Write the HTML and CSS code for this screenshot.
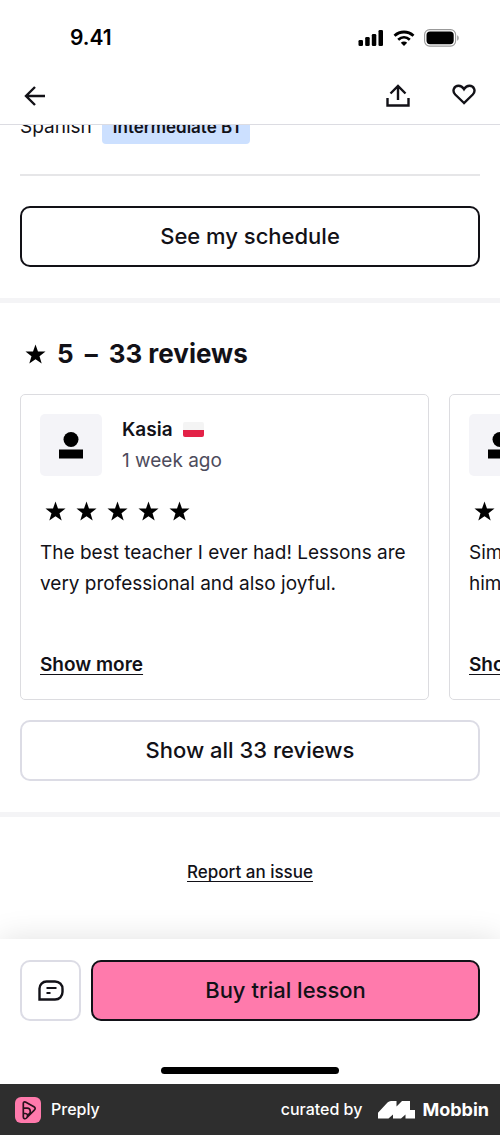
FILE: index.html
```html
<!DOCTYPE html>
<html lang="en">
<head>
  <meta charset="UTF-8" />
  <meta name="viewport" content="width=device-width, initial-scale=1.0" />
  <title>Preply</title>
  <link rel="stylesheet" href="styles.css">
</head>
<body>
  <svg class="sprite" aria-hidden="true">
    <symbol id="star" viewBox="0 0 22 20">
      <path d="M11 0l2.600 7.300 7.900.2-6.300 4.800 2.300 7.700-6.500-4.600L4.500 20l2.300-7.700L.5 7.500l7.900-.2z" />
    </symbol>
    <symbol id="person" viewBox="0 0 24 27">
      <circle cx="12" cy="7.500" r="7.500" />
      <path d="M0 17.500h24v9H0z" />
    </symbol>
  </svg>

  <div class="app">
    <header class="header">
      <div class="status-bar">
        <span class="time">9.41</span>
        <div class="status-icons">
          <svg width="26" height="16" viewBox="0 0 26 16">
            <rect x="0.500" y="10" width="4.500" height="6" rx="1.300" />
            <rect x="7.200" y="7" width="4.500" height="9" rx="1.300" />
            <rect x="13.800" y="4" width="4.500" height="12" rx="1.300" />
            <rect x="20.500" y="0" width="4.500" height="16" rx="1.300" />
          </svg>
          <svg width="22" height="16" viewBox="0 0 22 16">
            <path d="M1.500 5.800C7 .7 15 .7 20.500 5.800M5.200 9.700c3.500-3.100 8.100-3.100 11.600 0" fill="none" stroke="#000" stroke-width="2.800" />
            <path d="M7.800 12.700c1.900-1.600 4.500-1.600 6.400 0L11 16z" />
          </svg>
          <svg width="36" height="18" viewBox="0 0 36 18">
            <rect x="0.600" y="0.600" width="31" height="16.500" rx="5" fill="none" stroke="#999" stroke-width="1.100" />
            <rect x="2.500" y="2.500" width="27.200" height="12.700" rx="3.600" />
            <path d="M33.200 6.200c2 .9 2 4.600 0 5.500z" fill="#999" />
          </svg>
        </div>
      </div>
      <nav class="nav">
        <button class="icon-btn" aria-label="Back">
          <svg width="22" height="20" viewBox="0 0 22 20">
            <path d="M21 10H2M11 1L2 10l9 9" fill="none" stroke="#121117" stroke-width="2.400" />
          </svg>
        </button>
        <div class="nav-actions">
          <button class="icon-btn" aria-label="Share">
            <svg width="24" height="24" viewBox="0 0 24 24">
              <path d="M1.500 14v7.500h21V14M12 16V2M4.500 9.500L12 2l7.500 7.500" fill="none" stroke="#121117" stroke-width="2.400" />
            </svg>
          </button>
          <button class="icon-btn" aria-label="Save">
            <svg width="24" height="24" viewBox="0 0 24 24">
              <path d="M12 19L3.200 10.500C-.3 6.800 2.200 1.800 6.500 1.800c2.300 0 4 1 5.500 3.400 1.500-2.400 3.200-3.400 5.500-3.400 4.300 0 6.800 5 3.300 8.700z" fill="none" stroke="#121117" stroke-width="2.400" />
            </svg>
          </button>
        </div>
      </nav>
    </header>

    <main>
      <section class="about">
        <div class="language">
          <span>Spanish</span>
          <span class="level">Intermediate B1</span>
        </div>
        <hr />
        <button class="btn btn-dark">See my schedule</button>
      </section>

      <section class="reviews">
        <h2><svg class="star"><use href="#star" /></svg><span>5</span><span>–</span><span>33 reviews</span></h2>
        <div class="review-list">
          <article class="card">
            <div class="author">
              <div class="avatar"><svg width="24" height="27"><use href="#person" /></svg></div>
              <div>
                <div class="name">Kasia <span class="flag"></span></div>
                <div class="date">1 week ago</div>
              </div>
            </div>
            <div class="stars">
              <svg class="star"><use href="#star" /></svg>
              <svg class="star"><use href="#star" /></svg>
              <svg class="star"><use href="#star" /></svg>
              <svg class="star"><use href="#star" /></svg>
              <svg class="star"><use href="#star" /></svg>
            </div>
            <p>The best teacher I ever had! Lessons are very professional and also joyful.</p>
            <a href="#">Show more</a>
          </article>
          <article class="card">
            <div class="author">
              <div class="avatar"><svg width="24" height="27"><use href="#person" /></svg></div>
            </div>
            <div class="stars">
              <svg class="star"><use href="#star" /></svg>
            </div>
            <p>Sim<br>him</p>
            <a href="#">Show more</a>
          </article>
        </div>
        <button class="btn">Show all 33 reviews</button>
      </section>

      <section class="report">
        <a href="#">Report an issue</a>
      </section>
    </main>

    <div class="bottom">
      <div class="actions">
        <button class="btn btn-message" aria-label="Message">
          <svg width="26" height="21" viewBox="0 0 26 21">
            <path d="M1.500 19.500V8.500a7 7 0 0 1 7-7h8.500c4.500 0 7.500 3.300 7.500 7.500v3c0 4.200-3 7.500-7.500 7.500z" fill="none" stroke="#121117" stroke-width="2.400" />
            <path d="M8.500 8H18.500M8.500 13H12.500" stroke="#121117" stroke-width="2.200" />
          </svg>
        </button>
        <button class="btn btn-dark btn-pink">Buy trial lesson</button>
      </div>
      <div class="home-bar"></div>
    </div>

    <footer class="credits">
      <svg width="26" height="26" viewBox="0 0 26 26">
        <rect width="26" height="26" rx="6" fill="#ff7aac" />
        <path d="M8.300 20V6.500c0-1.500 1.300-2 2.600-1.300l8.100 4.600c1.500.9 1.500 2.300.3 3.300L11.500 21c-1.500 1.400-3.200.7-3.200-1zM8.500 11.200h3.700c4 0 4 5.800.8 6.500M8.500 16.500h1.700c2.500 0 3 2.200 1.700 3.500" fill="none" stroke="#29121c" stroke-width="1.700" />
      </svg>
      <span>Preply</span>
      <span class="curated">curated by</span>
      <a class="mobbin" href="#">
        <svg width="38" height="18" viewBox="0 0 38 18" fill="#fff">
          <path d="M0 17.500v-5.800L9.500 1.500Q11 0 13 0h5.500v5.500L24 0h8v9h5v8.500h-9.500v-4L23 17.500h-8v-4l-4.500 4z" />
        </svg>
        Mobbin
      </a>
    </footer>
  </div>
</body>
</html>
```

FILE: styles.css
```css
* { box-sizing: border-box; }
body {
  margin: 0;
  font-family: Inter, "Liberation Sans", sans-serif;
  font-size: 19px;
  line-height: 31px;
  color: #121117;
  background: #fff;
}
svg { display: block; flex: none; }
a { color: inherit; text-underline-offset: 3px; }
button {
  font: inherit;
  color: inherit;
  cursor: pointer;
}
.sprite { position: absolute; width: 0; height: 0; }
.app {
  display: flex;
  flex-direction: column;
  min-height: 100vh;
}

.header {
  position: sticky;
  top: 0;
  background: #fff;
  border-bottom: 1px solid #dcdce2;
}
.status-bar {
  display: flex;
  align-items: center;
  justify-content: space-between;
  height: 75px;
  padding: 0 40px 0 70px;
}
.time {
  font-size: 21px;
  font-weight: 600;
  color: #000;
}
.status-icons {
  display: flex;
  align-items: center;
  gap: 9px;
}
.nav {
  display: flex;
  justify-content: space-between;
  height: 49px;
  padding: 9px 24px 0;
}
.nav-actions { display: flex; gap: 42px; }
.icon-btn {
  display: flex;
  align-items: center;
  height: 24px;
  padding: 0;
  border: none;
  background: none;
}

main { flex: 1; }
.about {
  padding: 0 20px 31px;
  border-bottom: 5px solid #f4f4f6;
}
.language {
  display: flex;
  align-items: flex-end;
  gap: 10px;
  height: 19px;
  overflow: hidden;
}
.language span { line-height: 34px; }
.language .level {
  padding: 0 11px;
  border-radius: 4px;
  font-size: 17px;
  font-weight: 600;
  background: #cce0ff;
}
hr {
  margin: 30px 0;
  border: none;
  border-top: 2px solid #e6e6e8;
}
.btn {
  display: block;
  width: 100%;
  height: 61px;
  border: 2px solid #dcdce5;
  border-radius: 10px;
  font-size: 22px;
  font-weight: 500;
  background: #fff;
}
.btn-dark { border-color: #121117; }

.reviews {
  padding: 31px 20px;
  border-bottom: 5px solid #f4f4f6;
}
h2 {
  display: flex;
  align-items: center;
  gap: 11px;
  margin: 0 0 20px;
  padding-left: 5px;
  font-size: 26px;
  line-height: 40px;
}
.star { width: 21px; height: 20px; }
.review-list {
  display: flex;
  gap: 20px;
  margin: 0 -20px 20px;
  padding: 0 20px;
  overflow-x: auto;
  scrollbar-width: none;
}
.card {
  flex: 0 0 409px;
  display: flex;
  flex-direction: column;
  align-items: flex-start;
  height: 306px;
  padding: 19px;
  border: 1px solid #dcdce0;
  border-radius: 5px;
}
.author { display: flex; gap: 20px; }
.avatar {
  display: flex;
  align-items: center;
  justify-content: center;
  width: 62px;
  height: 62px;
  border-radius: 5px;
  background: #f4f4f8;
}
.name {
  display: flex;
  align-items: center;
  gap: 10px;
  font-weight: 600;
}
.flag {
  width: 21px;
  height: 15px;
  border-radius: 2px;
  background: linear-gradient(#f4f4f4 50%, #e32247 50%);
}
.date { color: #4d4c5c; }
.stars {
  display: flex;
  gap: 10px;
  padding: 25px 5px 16px;
}
.card p { margin: 0; }
.card a {
  margin-top: auto;
  font-weight: 600;
}

.report {
  padding: 40px 20px 50px;
  text-align: center;
  font-size: 17px;
  font-weight: 500;
}

.bottom {
  position: sticky;
  bottom: 0;
  padding: 21px 20px 10px;
  background: #fff;
  box-shadow: 0 0 30px rgba(0, 0, 0, 0.12);
}
.actions { display: flex; gap: 10px; }
.btn-message {
  display: flex;
  align-items: center;
  justify-content: center;
  flex: none;
  width: 61px;
}
.btn-pink { background: #ff7aac; }
.home-bar {
  width: 178px;
  height: 7px;
  margin: 46px auto 0;
  border-radius: 4px;
  background: #000;
}
.credits {
  position: relative;
  display: flex;
  align-items: center;
  gap: 10px;
  height: 51px;
  padding: 0 11px 0 15px;
  font-size: 16px;
  font-weight: 500;
  color: #fff;
  background: #2e2e2e;
}
.curated { margin-left: auto; }
.mobbin {
  display: flex;
  align-items: center;
  gap: 6px;
  margin-left: 6px;
  font-size: 18px;
  font-weight: 700;
  text-decoration: none;
}
```
